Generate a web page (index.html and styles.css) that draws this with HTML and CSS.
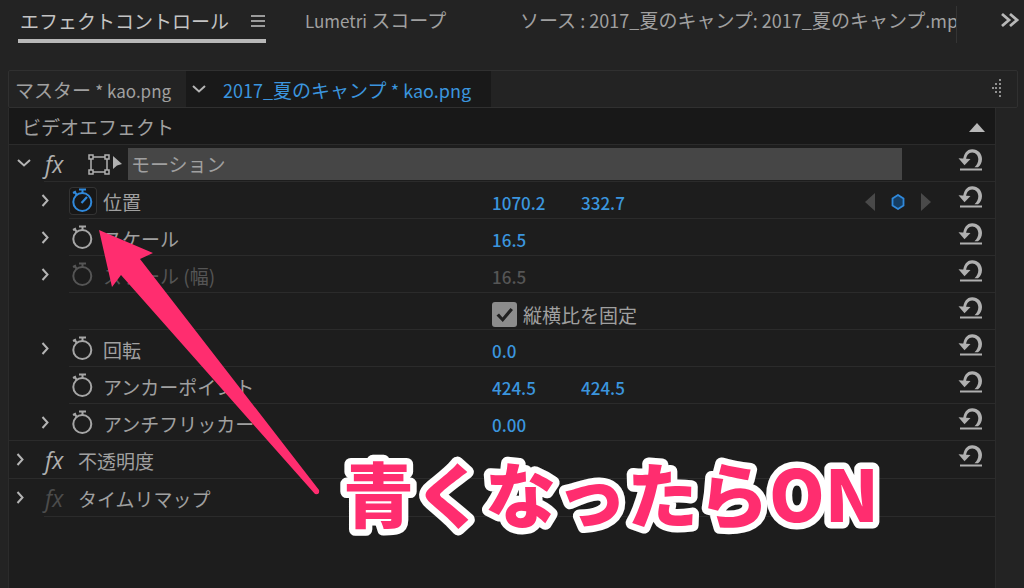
FILE: index.html
```html
<!DOCTYPE html>
<html lang="ja">
<head>
<meta charset="utf-8">
<meta name="viewport" content="width=device-width, initial-scale=1">
<title>エフェクトコントロール</title>
<link rel="stylesheet" href="styles.css">
</head>
<body>
<svg class="sprite" aria-hidden="true">
  <symbol id="reset" viewBox="0 0 24 24">
    <path d="M5 13C5.500 6 8.500 1.200 14.200 1.200C20 1.200 24 5.500 24 11C24 14.500 22.500 17.500 20 19.200L16.500 19.200C19 17 20.300 14.500 20.300 11.300C20.300 7.500 17.800 4.500 14.200 4.500C10.500 4.500 8.500 7.500 8 11.500Z" fill="currentColor"/>
    <path d="M0.500 10.200L12.500 11L6.500 17.300Z" fill="currentColor"/>
    <path d="M2 21.500H24" stroke="currentColor" stroke-width="2"/>
  </symbol>
  <symbol id="watch" viewBox="0 0 28 28">
    <g fill="none" stroke="currentColor" stroke-width="2">
      <circle cx="13.300" cy="15" r="9"/>
      <path d="M10 2.500H17M13.500 2.500V6"/>
      <path d="M4 6L7 4.500M5.500 5L8 8" />
    </g>
  </symbol>
  <symbol id="hand" viewBox="0 0 28 28"><path d="M12.500 16L18 10" stroke="currentColor" stroke-width="2.200" fill="none"/></symbol>
  <symbol id="right" viewBox="0 0 16 16"><path d="M5.500 2L10.500 7.500L5.500 13" stroke="currentColor" stroke-width="2" fill="none"/></symbol>
  <symbol id="down" viewBox="0 0 16 16"><path d="M2 4L8 9.500L14 4" stroke="currentColor" stroke-width="2" fill="none"/></symbol>
</svg>

<nav class="panel-tabs">
  <button class="panel-tab active">エフェクトコントロール
    <svg class="menu-icon" viewBox="0 0 16 16"><path d="M1 3H15M1 8H15M1 13H15" stroke="currentColor" stroke-width="1.500"/></svg>
  </button>
  <button class="panel-tab lumetri"><span class="latin">Lumetri</span> スコープ</button>
  <button class="panel-tab source">ソース <span class="latin">: 2017_</span>夏のキャンプ<span class="latin">: 2017_</span>夏のキャンプ<span class="latin">.mp</span></button>
  <button class="overflow" aria-label="その他のパネル"><svg viewBox="0 0 20 16"><path d="M2 2L9 8L2 14M10 2L17 8L10 14" stroke="currentColor" stroke-width="2.800" fill="none"/></svg></button>
</nav>

<div class="clip-tabs">
  <button class="clip-tab">マスター <span class="latin">* kao.png</span></button>
  <button class="clip-tab current"><svg class="icon16"><use href="#down"/></svg><span class="clip-name"><span class="latin">2017_</span>夏のキャンプ <span class="latin">* kao.png</span></span></button>
  <svg class="grip" viewBox="0 0 12 18" aria-hidden="true"><path d="M1 9h2M4 5h2M4 9h2M4 13h2M8 1h2M8 5h2M8 9h2M8 13h2M8 17h2" stroke="currentColor" stroke-width="2"/></svg>
</div>

<main class="effects">
  <header class="row heading">
    <h1>ビデオエフェクト</h1>
    <button class="collapse" aria-label="折りたたむ"><svg viewBox="0 0 16 10"><path d="M0 10L8 1L16 10Z" fill="currentColor"/></svg></button>
  </header>

  <section>
    <div class="row motion">
      <button class="twirl" aria-label="閉じる"><svg class="icon16"><use href="#down"/></svg></button>
      <button class="fx">fx</button>
      <svg class="transform" viewBox="0 0 36 22" aria-hidden="true">
        <g fill="#1d1d1d" stroke="currentColor" stroke-width="1.500"><path d="M4 4H20V19H4Z"/><path d="M2 2H6V6H2ZM18 2H22V6H18ZM2 17H6V21H2ZM18 17H22V21H18Z"/></g>
        <path d="M26 3L35 11L30 12.500L26 16Z" fill="currentColor"/>
      </svg>
      <h2 class="selected">モーション</h2>
      <button class="reset" aria-label="モーションをリセット"><svg><use href="#reset"/></svg></button>
    </div>
    <div class="row prop">
      <div class="name"><button class="twirl" aria-label="開く"><svg class="icon16"><use href="#right"/></svg></button><button class="watch on" aria-label="位置のアニメーション"><svg><use href="#watch"/><use href="#hand"/></svg></button><label for="px">位置</label></div>
      <div class="values"><input id="px" value="1070.2"><input aria-label="位置 Y" value="332.7"></div>
      <div class="keys">
        <button aria-label="前のキーフレーム"><svg viewBox="0 0 12 18"><path d="M11 0V18L1 9Z" fill="#494949"/></svg></button>
        <button class="key" aria-label="キーフレーム"><svg viewBox="0 0 14 16"><path d="M7 1L12.500 4.500V11.500L7 15L1.500 11.500V4.500Z" fill="#153d62" stroke="#3089db" stroke-width="1.800"/></svg></button>
        <button aria-label="次のキーフレーム"><svg viewBox="0 0 12 18"><path d="M1 0V18L11 9Z" fill="#494949"/></svg></button>
      </div>
      <button class="reset" aria-label="位置をリセット"><svg><use href="#reset"/></svg></button>
    </div>
    <div class="row prop">
      <div class="name"><button class="twirl" aria-label="開く"><svg class="icon16"><use href="#right"/></svg></button><button class="watch" aria-label="スケールのアニメーション"><svg><use href="#watch"/></svg></button><label for="scale">スケール</label></div>
      <div class="values"><input id="scale" value="16.5"></div>
      <button class="reset" aria-label="スケールをリセット"><svg><use href="#reset"/></svg></button>
    </div>
    <div class="row prop disabled">
      <div class="name"><button class="twirl" aria-label="開く"><svg class="icon16"><use href="#right"/></svg></button><button class="watch" disabled aria-label="スケール (幅) のアニメーション"><svg><use href="#watch"/></svg></button><label for="width">スケール (幅)</label></div>
      <div class="values"><input id="width" value="16.5" disabled></div>
      <button class="reset" aria-label="スケール (幅) をリセット"><svg><use href="#reset"/></svg></button>
    </div>
    <div class="row prop">
      <div class="name"></div>
      <div class="values"><label class="check"><input type="checkbox" checked>縦横比を固定</label></div>
      <button class="reset" aria-label="縦横比をリセット"><svg><use href="#reset"/></svg></button>
    </div>
    <div class="row prop">
      <div class="name"><button class="twirl" aria-label="開く"><svg class="icon16"><use href="#right"/></svg></button><button class="watch" aria-label="回転のアニメーション"><svg><use href="#watch"/></svg></button><label for="rotation">回転</label></div>
      <div class="values"><input id="rotation" value="0.0"></div>
      <button class="reset" aria-label="回転をリセット"><svg><use href="#reset"/></svg></button>
    </div>
    <div class="row prop">
      <div class="name"><span class="twirl"></span><button class="watch" aria-label="アンカーポイントのアニメーション"><svg><use href="#watch"/></svg></button><label for="ax">アンカーポイント</label></div>
      <div class="values"><input id="ax" value="424.5"><input aria-label="アンカーポイント Y" value="424.5"></div>
      <button class="reset" aria-label="アンカーポイントをリセット"><svg><use href="#reset"/></svg></button>
    </div>
    <div class="row prop last">
      <div class="name"><button class="twirl" aria-label="開く"><svg class="icon16"><use href="#right"/></svg></button><button class="watch" aria-label="アンチフリッカーのアニメーション"><svg><use href="#watch"/></svg></button><label for="flicker">アンチフリッカー</label></div>
      <div class="values"><input id="flicker" value="0.00"></div>
      <button class="reset" aria-label="アンチフリッカーをリセット"><svg><use href="#reset"/></svg></button>
    </div>
  </section>

  <section class="row effect">
    <button class="twirl" aria-label="開く"><svg class="icon16"><use href="#right"/></svg></button>
    <button class="fx">fx</button>
    <h2>不透明度</h2>
    <button class="reset" aria-label="不透明度をリセット"><svg><use href="#reset"/></svg></button>
  </section>
  <section class="row effect end">
    <button class="twirl" aria-label="開く"><svg class="icon16"><use href="#right"/></svg></button>
    <button class="fx off">fx</button>
    <h2>タイムリマップ</h2>
  </section>
</main>

<svg class="arrow" viewBox="0 0 224 268" aria-hidden="true"><path d="M1 2L55 25L42 31L221 262Q222 267 217 266L23 47L14 59Z" fill="#ff2d6f"/></svg>
<svg class="caption" viewBox="0 0 560 100"><text x="8" y="78">青くなったらON</text></svg>
</body>
</html>
```
FILE: styles.css
```css
* { box-sizing: border-box; }

body {
  margin: 0;
  min-height: 100vh;
  display: flex;
  flex-direction: column;
  position: relative;
  overflow: hidden;
  background: #232323;
  color: #a0a0a0;
  font: 19px/28px "Noto Sans CJK JP", sans-serif;
}

button, input {
  margin: 0;
  padding: 0;
  border: 0;
  background: none;
  color: inherit;
  font: inherit;
  text-align: left;
}

svg { display: block; flex: none; }
h1, h2 { margin: 0; font-size: 19px; font-weight: 400; }
.sprite { position: absolute; width: 0; height: 0; }
.latin { font-size: 17px; }
.source .latin, .current .latin { font-size: 18px; }
.icon16 { width: 16px; height: 16px; color: #b4b4b4; }

.panel-tabs {
  display: flex;
  align-items: flex-start;
  height: 70px;
  padding: 6px 4px 0 18px;
}
.panel-tab { flex: none; height: 37px; padding-bottom: 9px; white-space: nowrap; }
.panel-tab.active {
  display: flex;
  align-items: center;
  justify-content: space-between;
  width: 248px;
  padding: 0 0 4px 2px;
  border-bottom: 4px solid #b8b8b8;
  color: #c4c4c4;
}
.menu-icon { width: 16px; height: 16px; }
.lumetri { width: 215px; margin-left: 39px; }
.source {
  flex: 1 1 0;
  min-width: 0;
  overflow: hidden;
  border-right: 1px solid #343434;
}
.overflow { margin: 6px 0 0 43px; color: #b8b8b8; }
.overflow svg { width: 20px; height: 16px; }

.clip-tabs {
  display: flex;
  flex: none;
  height: 38px;
  margin: 0 6px 0 8px;
  border: 1px solid #303030;
  border-radius: 2px;
}
.clip-tab { width: 177px; padding: 2px 0 0 6px; white-space: nowrap; }
.clip-tab.current {
  display: flex;
  align-items: center;
  width: 305px;
  padding-left: 5px;
  background: #191919;
  color: #3b95de;
}
.clip-name { margin-left: 16px; }
.grip { width: 12px; height: 18px; margin: 8px 14px 0 auto; color: #909090; }

.effects {
  flex: 1;
  margin: 0 28px 0 8px;
  border: solid #2b2b2b;
  border-width: 0 1px;
  background: #1d1d1d;
}
.row {
  display: flex;
  align-items: center;
  position: relative;
  height: 37px;
}
.row::after {
  content: "";
  position: absolute;
  right: 0;
  bottom: 0;
  left: 0;
  border-bottom: 1px solid #2b2b2b;
}
.heading { justify-content: space-between; padding: 0 10px 0 13px; background: #181818; }
.collapse { color: #b8b8b8; }
.collapse svg { width: 16px; height: 10px; }

.motion { padding-left: 7px; }
.motion::after, .end::after { left: 35px; }
.motion .fx { margin-left: 13px; }
.transform { width: 36px; height: 22px; margin-left: 18px; color: #b0b0b0; }
.selected {
  flex: 1;
  height: 32px;
  margin-left: 5px;
  padding: 2px 0 0 3px;
  background: #464646;
}
.selected + .reset { margin-left: 56px; }
.fx {
  width: 24px;
  color: #b0b0b0;
  font: italic 23px/28px "Open Sans", sans-serif;
}
.fx.off { color: #4c4c4c; }

.reset { flex: none; margin: 0 13px 8px auto; color: #b0b0b0; }
.reset svg { width: 24px; height: 24px; }

.prop::after { left: 60px; }
.prop.last::after { left: 0; }
.name { display: flex; align-items: center; flex: 0 0 483px; }
.prop .twirl { width: 32px; margin-left: 28px; }
.watch { width: 28px; height: 28px; color: #a6a6a6; }
.watch svg { width: 28px; height: 28px; }
.watch.on { border-radius: 4px; background: #171717; box-shadow: inset 0 0 0 1px #333; color: #3089db; }
.name label { margin-left: 6px; padding-top: 2px; }
.values { display: flex; flex: 1; min-width: 0; }
.values > input {
  width: 80px;
  margin: 4px 9px 0 0;
  color: #3b95de;
  font-size: 17px;
  font-weight: 500;
}
.disabled label, .disabled .watch, .disabled .values > input { color: #555; }
.check { display: flex; align-items: center; gap: 6px; padding-top: 6px; }
.check input {
  width: 25px;
  height: 25px;
  appearance: none;
  border-radius: 3px;
  background: #8c8c8c;
}
.check input::before {
  content: "";
  display: block;
  width: 25px;
  height: 25px;
  background: #202020;
  clip-path: polygon(18% 54%, 28% 46%, 42% 62%, 74% 24%, 84% 32%, 43% 80%);
}
.keys { display: flex; align-items: center; gap: 15px; margin-right: 26px; padding-top: 2px; }
.keys svg { width: 12px; height: 18px; }
.keys .key svg { width: 14px; height: 16px; }

.effect { height: 38px; padding-left: 3px; }
.effect .fx { margin-left: 17px; }
.effect h2 { margin-left: 9px; padding-top: 2px; }

.arrow { position: absolute; top: 228px; left: 98px; width: 224px; height: 268px; }
.caption {
  position: absolute;
  top: 444px;
  left: 335px;
  width: 560px;
  height: 100px;
  font-size: 71px;
  font-weight: 900;
  fill: #ff2d6f;
  stroke: #fff;
  stroke-width: 13px;
  stroke-linejoin: round;
  paint-order: stroke fill;
}
```
